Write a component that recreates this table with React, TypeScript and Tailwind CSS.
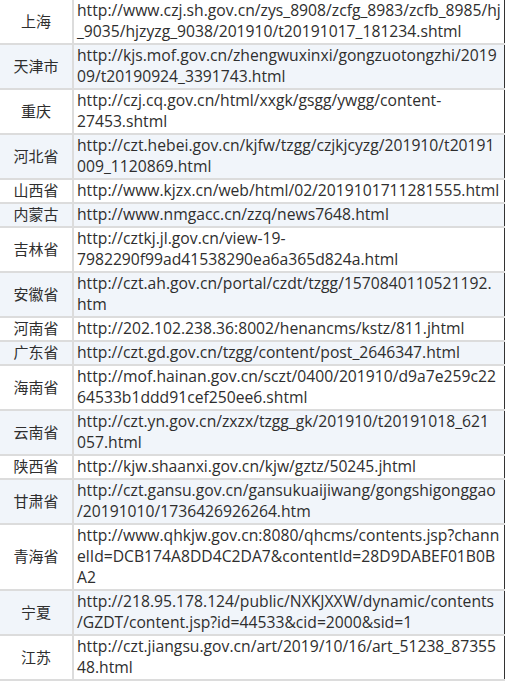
const rows: { name: string; lines: string[] }[] = [
  { name: '上海', lines: ['http://www.czj.sh.gov.cn/zys_8908/zcfg_8983/zcfb_8985/hj', '_9035/hjzyzg_9038/201910/t20191017_181234.shtml'] },
  { name: '天津市', lines: ['http://kjs.mof.gov.cn/zhengwuxinxi/gongzuotongzhi/2019', '09/t20190924_3391743.html'] },
  { name: '重庆', lines: ['http://czj.cq.gov.cn/html/xxgk/gsgg/ywgg/content-', '27453.shtml'] },
  { name: '河北省', lines: ['http://czt.hebei.gov.cn/kjfw/tzgg/czjkjcyzg/201910/t20191', '009_1120869.html'] },
  { name: '山西省', lines: ['http://www.kjzx.cn/web/html/02/2019101711281555.html'] },
  { name: '内蒙古', lines: ['http://www.nmgacc.cn/zzq/news7648.html'] },
  { name: '吉林省', lines: ['http://cztkj.jl.gov.cn/view-19-', '7982290f99ad41538290ea6a365d824a.html'] },
  { name: '安徽省', lines: ['http://czt.ah.gov.cn/portal/czdt/tzgg/1570840110521192.', 'htm'] },
  { name: '河南省', lines: ['http://202.102.238.36:8002/henancms/kstz/811.jhtml'] },
  { name: '广东省', lines: ['http://czt.gd.gov.cn/tzgg/content/post_2646347.html'] },
  { name: '海南省', lines: ['http://mof.hainan.gov.cn/sczt/0400/201910/d9a7e259c22', '64533b1ddd91cef250ee6.shtml'] },
  { name: '云南省', lines: ['http://czt.yn.gov.cn/zxzx/tzgg_gk/201910/t20191018_621', '057.html'] },
  { name: '陕西省', lines: ['http://kjw.shaanxi.gov.cn/kjw/gztz/50245.jhtml'] },
  { name: '甘肃省', lines: ['http://czt.gansu.gov.cn/gansukuaijiwang/gongshigonggao', '/20191010/1736426926264.htm'] },
  { name: '青海省', lines: ['http://www.qhkjw.gov.cn:8080/qhcms/contents.jsp?chann', 'elId=DCB174A8DD4C2DA7&contentId=28D9DABEF01B0B', 'A2'] },
  { name: '宁夏', lines: ['http://218.95.178.124/public/NXKJXXW/dynamic/contents', '/GZDT/content.jsp?id=44533&cid=2000&sid=1'] },
  { name: '江苏', lines: ['http://czt.jiangsu.gov.cn/art/2019/10/16/art_51238_87355', '48.html'] },
];

export default function App() {
  return (
    <div
      className="w-[507px] h-[685px] bg-white overflow-hidden text-[#2e2e2e] leading-[21px]"
      style={{ fontFamily: "'Open Sans', 'Noto Sans CJK SC', sans-serif" }}
    >
      <table className="w-[505px] border-collapse table-fixed border-r border-r-[#333]">
        <colgroup>
          <col className="w-[73px]" />
          <col />
        </colgroup>
        <tbody>
          {rows.map((row, i) => (
            <tr key={row.name} className={i % 2 === 1 ? 'bg-[#f1f5fa]' : 'bg-white'}>
              <td className="border-b-2 border-r-2 border-[#dcdcdc] text-center align-middle text-[15px] py-0 pb-px">
                {row.name}
              </td>
              <td className="border-b-2 border-[#dcdcdc] pl-[3px] pt-0 pb-px align-top whitespace-nowrap text-[15.7px]">
                {row.lines.map((line, j) => (
                  <div key={j}>{line}</div>
                ))}
              </td>
            </tr>
          ))}
        </tbody>
      </table>
    </div>
  );
}
